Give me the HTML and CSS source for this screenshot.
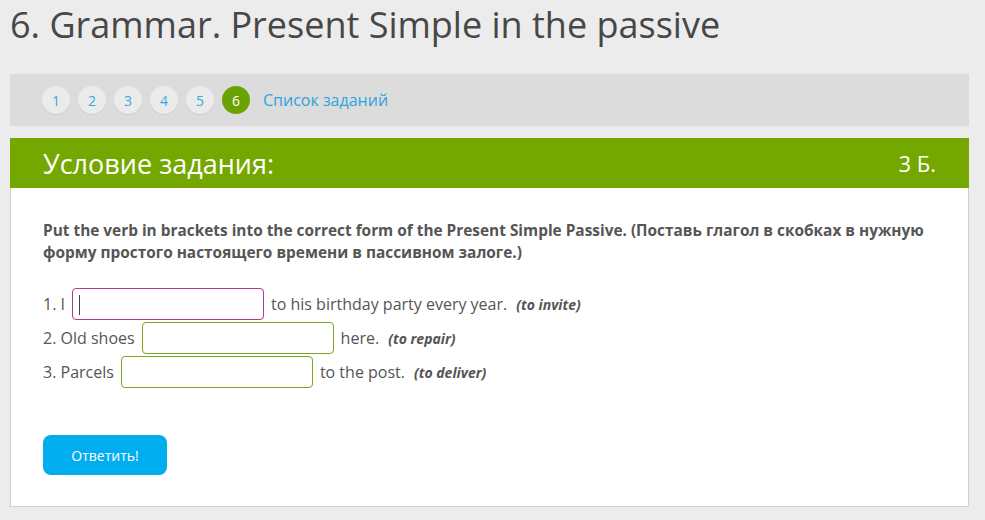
FILE: index.html
```html
<!DOCTYPE html>
<html lang="ru">
<head>
<meta charset="utf-8">
<title>Grammar</title>
<link rel="stylesheet" href="styles.css">
</head>
<body>
<div class="page">
  <h1 class="title">6. Grammar. Present Simple in the passive</h1>
  <nav class="steps">
    <span class="step">1</span>
    <span class="step">2</span>
    <span class="step">3</span>
    <span class="step">4</span>
    <span class="step">5</span>
    <span class="step active">6</span>
    <a class="list-link" href="#">Список заданий</a>
  </nav>
  <div class="task-head">
    <span class="task-title">Условие задания:</span>
    <span class="task-score">3 Б.</span>
  </div>
  <div class="task-body">
    <p class="instr">Put the verb in brackets into the correct form of the Present Simple Passive. (Поставь глагол в скобках в нужную форму простого настоящего времени в пассивном залоге.)</p>
    <div class="rows">
      <div class="row"><span>1. I</span><input class="field focus" type="text"><span>to his birthday party every year.</span><em class="hint">(to invite)</em></div>
      <div class="row"><span>2. Old shoes</span><input class="field" type="text"><span>here.</span><em class="hint">(to repair)</em></div>
      <div class="row"><span>3. Parcels</span><input class="field" type="text"><span>to the post.</span><em class="hint">(to deliver)</em></div>
    </div>
    <button class="submit" type="button">Ответить!</button>
  </div>
</div>
</body>
</html>
```
FILE: styles.css
```css
html, body {
  margin: 0;
  padding: 0;
  background: #ececec;
}
body {
  font-family: "Open Sans", "Noto Sans", sans-serif;
  color: #555;
}
.page {
  padding: 0 16px 0 10px;
}
.title {
  margin: 0;
  padding-top: 2px;
  font-size: 36px;
  font-weight: 400;
  color: #474747;
  line-height: 46px;
  letter-spacing: 0;
}
.steps {
  margin-top: 26px;
  height: 52px;
  background: #dcdcdc;
  display: flex;
  align-items: center;
  padding-left: 32px;
  gap: 8px;
}
.step {
  width: 28px;
  height: 28px;
  border-radius: 50%;
  background: #ebebeb;
  box-shadow: 0 1px 1px rgba(0,0,0,0.08);
  color: #3aa8dc;
  font-size: 14px;
  display: flex;
  align-items: center;
  justify-content: center;
}
.step.active {
  background: #6aa300;
  color: #fff;
  box-shadow: none;
}
.list-link {
  margin-left: 5px;
  color: #2fa3dc;
  text-decoration: none;
  font-size: 16px;
}
.task-head {
  margin-top: 12px;
  height: 50px;
  background: #74a800;
  color: #fff;
  display: flex;
  align-items: center;
  justify-content: space-between;
  padding: 0 33px;
}
.task-title {
  font-size: 27px;
}
.task-score {
  font-size: 22px;
}
.task-body {
  background: #fff;
  border: 1px solid #cfcfcf;
  border-top: none;
  height: 319px;
  box-sizing: border-box;
  padding: 32px 32px 0 32px;
}
.instr {
  margin: 0;
  font-weight: 700;
  font-size: 15.4px;
  line-height: 22px;
  color: #555;
}
.rows {
  margin-top: 24px;
  display: flex;
  flex-direction: column;
  gap: 2px;
}
.row {
  display: flex;
  align-items: center;
  gap: 7px;
  height: 32px;
  font-size: 16px;
  color: #555;
}
.field {
  width: 192px;
  height: 32px;
  box-sizing: border-box;
  border: 1px solid #7aa51e;
  border-radius: 4px;
  background: #fff;
  margin: 0;
  padding: 0 6px;
  font-family: inherit;
  font-size: 16px;
  outline: none;
}
.field.focus {
  border-color: #b03a8a;
  background-image: linear-gradient(#444, #444);
  background-size: 1px 20px;
  background-position: 6px 6px;
  background-repeat: no-repeat;
}
.hint {
  margin-left: 2px;
  font-weight: 700;
  font-size: 14px;
  color: #555;
}
.submit {
  margin-top: 47px;
  width: 124px;
  height: 40px;
  border: none;
  border-radius: 8px;
  background: #00aeef;
  color: #fff;
  font-family: "Open Sans", "Noto Sans", sans-serif;
  font-size: 14px;
  padding: 0;
}
```
